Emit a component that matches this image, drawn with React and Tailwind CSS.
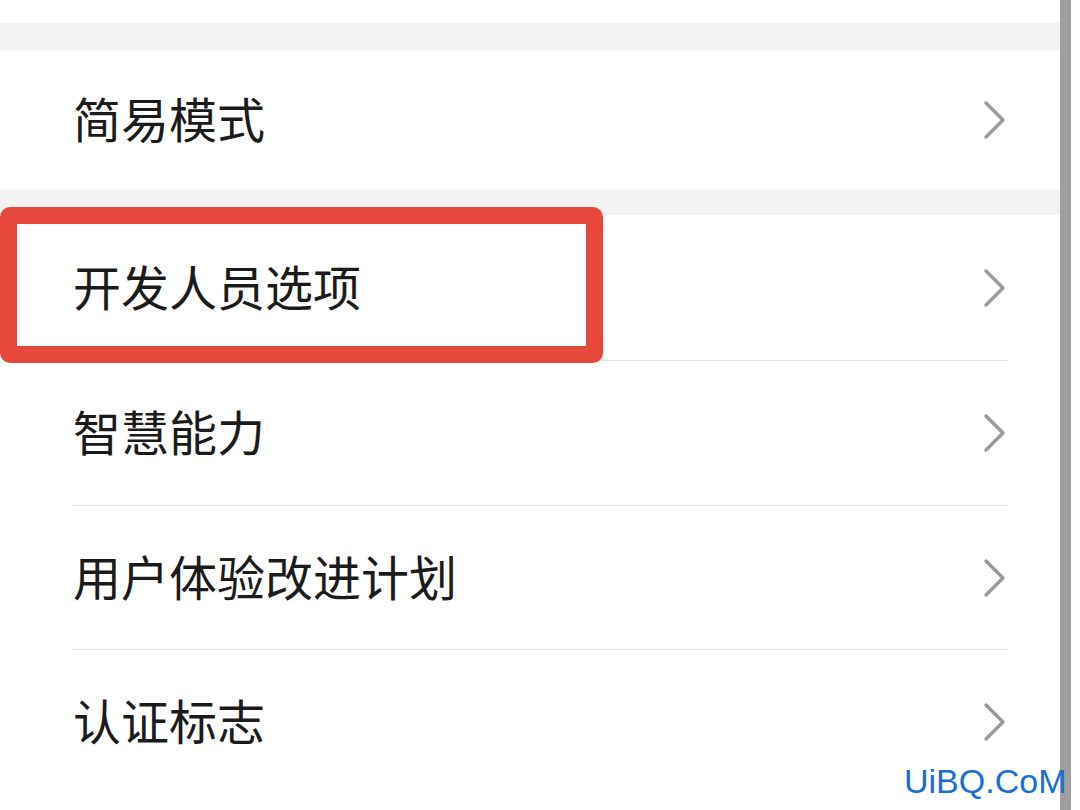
import React from "react";

const Chevron = () => (
  <svg width="26" height="40" viewBox="0 0 26 40" fill="none" className="shrink-0">
    <path d="M4 3 L21 20 L4 37" stroke="#9a9a9a" strokeWidth="3.5" strokeLinecap="round" strokeLinejoin="round" />
  </svg>
);

const Item = ({ label, h }) => (
  <div className={`flex ${h} items-center justify-between pl-[73px] pr-[52px]`}>
    <span className="mb-[6px] text-[48px] leading-none text-[#1b1b1b]">{label}</span>
    <Chevron />
  </div>
);

const Divider = () => <div className="ml-[72px] mr-[53px] h-px bg-[#e4e4e4]" />;

export default function App() {
  const font = { fontFamily: '"Noto Sans CJK SC", "Noto Sans", sans-serif' };
  return (
    <div className="relative h-[810px] w-[1080px] overflow-hidden bg-white" style={font}>
      <div className="w-[1060px]">
        <div className="h-[23px] bg-white" />
        <div className="h-[27px] bg-[#f3f3f3]" />
        <Item label="简易模式" h="h-[140px]" />
        <div className="h-[25px] bg-[#f3f3f3]" />
        <div className="flex flex-col">
          <Item label="开发人员选项" h="h-[145px]" />
          <Divider />
          <Item label="智慧能力" h="h-[144px]" />
          <Divider />
          <Item label="用户体验改进计划" h="h-[143px]" />
          <Divider />
          <Item label="认证标志" h="h-[143px]" />
        </div>
      </div>

      {/* red highlight box */}
      <div className="absolute left-0 top-[207px] h-[156px] w-[603px] rounded-[10px] border-[17px] border-[#e6493b]" />

      {/* scrollbar */}
      <div className="absolute right-[9px] top-0 h-full w-[11px] bg-[#9f9f9f]" />

      {/* watermark */}
      <div
        className="absolute left-[904px] top-[764px] text-[34px] leading-none text-[#1a6ed2]"
        style={{ fontFamily: '"Liberation Sans", Arial, sans-serif' }}
      >
        UiBQ.CoM
      </div>
    </div>
  );
}
